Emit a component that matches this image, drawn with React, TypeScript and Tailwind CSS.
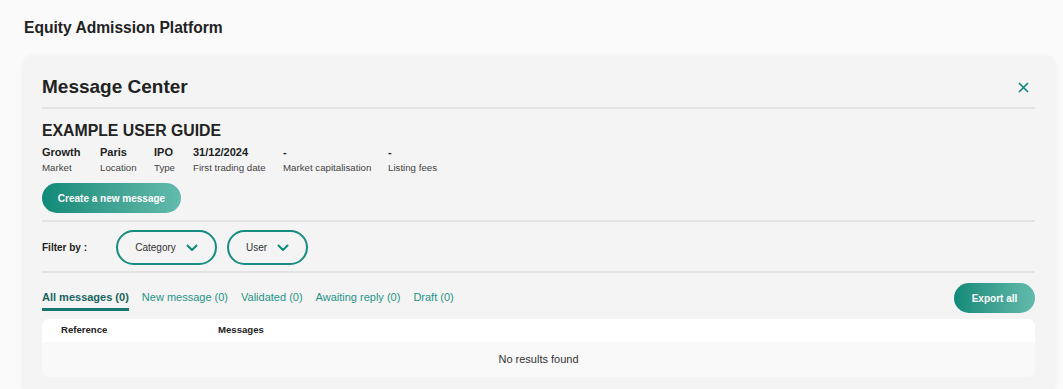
import { FC } from "react";

const infos = [
  { value: "Growth", label: "Market", w: "w-[58px]" },
  { value: "Paris", label: "Location", w: "w-[54px]" },
  { value: "IPO", label: "Type", w: "w-[39px]" },
  { value: "31/12/2024", label: "First trading date", w: "w-[90px]" },
  { value: "-", label: "Market capitalisation", w: "w-[105px]" },
  { value: "-", label: "Listing fees", w: "w-[80px]" },
];

const tabs = ["New message (0)", "Validated (0)", "Awaiting reply (0)", "Draft (0)"];

const Chevron: FC = () => (
  <svg width="12" height="8" viewBox="0 0 12 8" fill="none">
    <path d="M1.5 1.5L6 6L10.5 1.5" stroke="#0e8a7d" strokeWidth="2" strokeLinecap="round" strokeLinejoin="round" />
  </svg>
);

const FilterPill: FC<{ label: string; width: string }> = ({ label, width }) => (
  <button
    className={`flex h-[35px] items-center justify-center gap-[10px] rounded-full border-2 border-[#178c80] text-[10px] text-[#333] ${width}`}
  >
    <span>{label}</span>
    <Chevron />
  </button>
);

export default function App() {
  return (
    <div className="min-h-[389px] bg-[#fafafa] pl-6 pr-[9px] pt-[18px] font-['Liberation_Sans',Arial,sans-serif] text-[#222]">
      <h1 className="text-[15.6px] font-bold leading-5">Equity Admission Platform</h1>

      <div className="mt-[19px] rounded-t-[10px] bg-[#f4f4f4] pl-[18px] pr-[19px] pt-[16px] pb-3 shadow-[0_0_6px_rgba(0,0,0,0.08)]">
        <div className="flex items-center justify-between border-b-2 border-[#e3e3e3] pb-[6px]">
          <h2 className="text-[19px] font-bold leading-7">Message Center</h2>
          <svg width="11" height="11" viewBox="0 0 11 11" className="mr-[6px]">
            <path d="M1 1L10 10M10 1L1 10" stroke="#11897c" strokeWidth="1.7" />
          </svg>
        </div>

        <h3 className="mt-[12px] text-[15.8px] font-bold leading-5">EXAMPLE USER GUIDE</h3>

        <div className="mt-[4px] flex leading-[15px]">
          {infos.map((info, i) => (
            <div key={i} className={`flex flex-col ${info.w}`}>
              <span className="text-[11px] font-bold">{info.value}</span>
              <span className="text-[9.7px] text-[#444]">{info.label}</span>
            </div>
          ))}
        </div>

        <button className="mt-[8px] h-[30px] w-[139px] rounded-full bg-gradient-to-r from-[#0c8a78] to-[#62bbad] text-[10px] font-bold text-white">
          Create a new message
        </button>

        <div className="mt-[7px] flex items-center gap-[10px] border-y-2 border-[#e3e3e3] pt-[8px] pb-[6px]">
          <span className="w-[64px] text-[10px] font-bold">Filter by :</span>
          <FilterPill label="Category" width="w-[101px]" />
          <FilterPill label="User" width="w-[81px]" />
        </div>

        <div className="mt-[10px] flex items-center justify-between">
          <div className="flex gap-[13px] text-[11px] leading-4">
            <span className="border-b-[3px] border-[#17766d] pt-[3px] pb-[3px] font-bold text-[#17655e]">
              All messages (0)
            </span>
            {tabs.map((t) => (
              <span key={t} className="pt-[3px] pb-[3px] text-[#1f9587]">
                {t}
              </span>
            ))}
          </div>
          <button className="h-[30px] w-[81px] rounded-full bg-gradient-to-r from-[#0c8a78] to-[#62bbad] text-[10px] font-bold text-white">
            Export all
          </button>
        </div>

        <div className="mt-[6px] overflow-hidden rounded-[7px]">
          <div className="flex h-[23px] items-center bg-white text-[9.6px] font-bold">
            <span className="w-[176px] pl-[19px]">Reference</span>
            <span>Messages</span>
          </div>
          <div className="flex h-[35px] items-center justify-center bg-[#f9f9f9] text-[11px] text-[#333]">
            No results found
          </div>
        </div>
      </div>
    </div>
  );
}
